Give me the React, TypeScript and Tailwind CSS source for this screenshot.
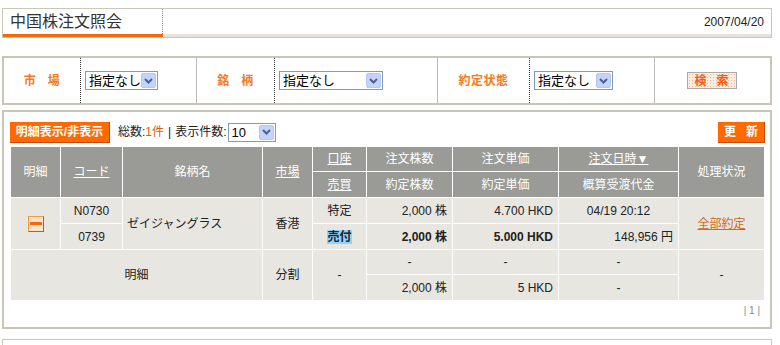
import React from "react";

const jp = "font-['Liberation_Sans','Noto_Sans_CJK_JP',sans-serif]";

function Chevron() {
  return (
    <svg width="9" height="6" viewBox="0 0 9 6">
      <path d="M1 1 L4.5 4.5 L8 1" stroke="#4d6185" strokeWidth="2" fill="none" />
    </svg>
  );
}

function Select({ value, width }: { value: string; width: string }) {
  return (
    <div className={`${width} h-[19px] border border-[#7f9db9] bg-white flex items-center justify-between pl-[3px] pr-[1px] text-[13px] text-black whitespace-nowrap`}>
      <span className="leading-none">{value}</span>
      <div className="shrink-0 w-[15px] h-[15px] rounded-[2px] bg-[#c3d3fd] border border-[#b5c8f5] flex items-center justify-center">
        <Chevron />
      </div>
    </div>
  );
}

function Label({ children }: { children: React.ReactNode }) {
  return <span className="text-[#f47b20] font-bold text-[12px] tracking-[0.5px]">{children}</span>;
}

const th = "bg-[#9a9b97] text-white font-normal border border-white text-[12px] text-center leading-none";
const td = "bg-[#e7e6e0] border border-white text-[12px] text-[#222] leading-none";

export default function App() {
  return (
    <div className={`w-[780px] h-[345px] bg-white overflow-hidden ${jp} text-[12px] text-[#222]`}>
      <div className="pt-[8px] pl-[2px] w-[772px]">
        {/* Title bar */}
        <div className="flex h-[30px] border border-[#cac6b8]">
          <div className="w-[160px] flex flex-col">
            <div className="flex-1 flex items-center pl-[7px] text-[16px] text-[#333] border-r border-dotted border-r-[#888]">
              中国株注文照会
            </div>
            <div className="h-[3px] bg-[#f26a10]" />
          </div>
          <div className="flex-1 flex items-center justify-end pr-[7px] text-[12px] text-[#222] border-b-[3px] border-b-[#e6e3dd]">
            2007/04/20
          </div>
        </div>

        {/* Search filters */}
        <div className="mt-[18px] h-[49px] border-[2px] border-[#c9c5b7] flex">
          <div className="w-[77px] flex items-center justify-center border-r border-dotted border-r-[#333]">
            <Label>市&nbsp;&nbsp;&nbsp;場</Label>
          </div>
          <div className="w-[116px] flex items-center pl-[4px] border-r border-r-[#bbb]">
            <Select value="指定なし" width="w-[73px]" />
          </div>
          <div className="w-[78px] flex items-center justify-center border-r border-dotted border-r-[#333]">
            <Label>銘&nbsp;&nbsp;&nbsp;柄</Label>
          </div>
          <div className="w-[163px] flex items-center pl-[4px] border-r border-r-[#bbb]">
            <Select value="指定なし" width="w-[104px]" />
          </div>
          <div className="w-[92px] flex items-center justify-center border-r border-dotted border-r-[#333]">
            <Label>約定状態</Label>
          </div>
          <div className="w-[125px] flex items-center pl-[4px] border-r border-r-[#bbb]">
            <Select value="指定なし" width="w-[79px]" />
          </div>
          <div className="flex-1 flex items-center justify-center pr-[2px]">
            <div className="w-[50px] h-[17px] border border-[#aaa] bg-[#fdebe0] bg-[radial-gradient(#f8b894_0.55px,transparent_0.75px)] bg-[length:3px_3px] flex items-center justify-center text-[#ff5a0a] font-bold text-[12px] leading-none">
              検&nbsp;&nbsp;&nbsp;索
            </div>
          </div>
        </div>

        {/* Results */}
        <div className="mt-[5px] h-[219px] border-[2px] border-[#c9c5b7] px-[6px] pt-[9px]">
          <div className="flex items-center h-[22px]">
            <div className="w-[100px] h-[21px] bg-[#ff6a00] border-r border-b border-[#c84a00] text-white text-[12px] font-bold flex items-center justify-center leading-none">
              明細表示/非表示
            </div>
            <div className="ml-[8px] flex items-center text-[12px] text-[#222]">
              <span>総数:</span>
              <span className="text-[#e06000]">1件</span>
              <span className="mx-[4px]">|</span>
              <span>表示件数:</span>
              <div className="ml-[1px]">
                <Select value="10" width="w-[48px]" />
              </div>
            </div>
            <div className="ml-auto mr-[-1px] w-[47px] h-[21px] bg-[#ff6a00] border-r border-b border-[#c84a00] text-white text-[12px] font-bold flex items-center justify-center leading-none">
              更&nbsp;&nbsp;&nbsp;新
            </div>
          </div>

          <table className="mt-[3px] border-collapse table-fixed w-[754px]">
            <colgroup>
              <col className="w-[50px]" />
              <col className="w-[62px]" />
              <col className="w-[140px]" />
              <col className="w-[50px]" />
              <col className="w-[54px]" />
              <col className="w-[86px]" />
              <col className="w-[106px]" />
              <col className="w-[120px]" />
              <col className="w-[86px]" />
            </colgroup>
            <thead>
              <tr className="h-[25px]">
                <th rowSpan={2} className={th}>明細</th>
                <th rowSpan={2} className={th}><span className="underline">コード</span></th>
                <th rowSpan={2} className={th}>銘柄名</th>
                <th rowSpan={2} className={th}><span className="underline">市場</span></th>
                <th className={th}><span className="underline">口座</span></th>
                <th className={th}>注文株数</th>
                <th className={th}>注文単価</th>
                <th className={th}><span className="underline">注文日時▼</span></th>
                <th rowSpan={2} className={th}>処理状況</th>
              </tr>
              <tr className="h-[26px]">
                <th className={th}><span className="underline">売買</span></th>
                <th className={th}>約定株数</th>
                <th className={th}>約定単価</th>
                <th className={th}>概算受渡代金</th>
              </tr>
            </thead>
            <tbody>
              <tr className="h-[26px]">
                <td rowSpan={2} className={`${td} text-center`}>
                  <div className="mx-auto w-[16px] h-[16px] bg-[#fde3c9] border border-[#f39a3c] border-r-[#c65a06] border-b-[#c65a06] flex items-center justify-center">
                    <div className="w-[12px] h-[3px] bg-[#eb6a12]" />
                  </div>
                </td>
                <td className={`${td} text-center`}>N0730</td>
                <td rowSpan={2} className={`${td} text-left pl-[4px]`}>ゼイジャングラス</td>
                <td rowSpan={2} className={`${td} text-center`}>香港</td>
                <td className={`${td} text-center`}>特定</td>
                <td className={`${td} text-right pr-[5px]`}>2,000 株</td>
                <td className={`${td} text-right pr-[5px]`}>4.700 HKD</td>
                <td className={`${td} text-center`}>04/19 20:12</td>
                <td rowSpan={2} className={`${td} text-center`}>
                  <span className="underline text-[#d2691e]">全部約定</span>
                </td>
              </tr>
              <tr className="h-[26px]">
                <td className={`${td} text-center`}>0739</td>
                <td className={`${td} text-center`}>
                  <span className="bg-[#8fd3ff] font-bold">売付</span>
                </td>
                <td className={`${td} text-right pr-[5px] font-bold`}>2,000 株</td>
                <td className={`${td} text-right pr-[5px] font-bold`}>5.000 HKD</td>
                <td className={`${td} text-right pr-[5px]`}>148,956 円</td>
              </tr>
              <tr className="h-[25px]">
                <td colSpan={3} rowSpan={2} className={`${td} text-center`}>明細</td>
                <td rowSpan={2} className={`${td} text-center`}>分割</td>
                <td rowSpan={2} className={`${td} text-center`}>-</td>
                <td className={`${td} text-center`}>-</td>
                <td className={`${td} text-center`}>-</td>
                <td className={`${td} text-center`}>-</td>
                <td rowSpan={2} className={`${td} text-center`}>-</td>
              </tr>
              <tr className="h-[26px]">
                <td className={`${td} text-right pr-[5px]`}>2,000 株</td>
                <td className={`${td} text-right pr-[5px]`}>5 HKD</td>
                <td className={`${td} text-center`}>-</td>
              </tr>
            </tbody>
          </table>

          <div className="flex justify-end pr-[4px] mt-[5px] text-[10px] text-[#888] leading-none">
            |&nbsp;1&nbsp;|
          </div>
        </div>

        <div className="mt-[10px] h-[20px] border border-[#c9c5b7] border-b-0" />
      </div>
    </div>
  );
}
